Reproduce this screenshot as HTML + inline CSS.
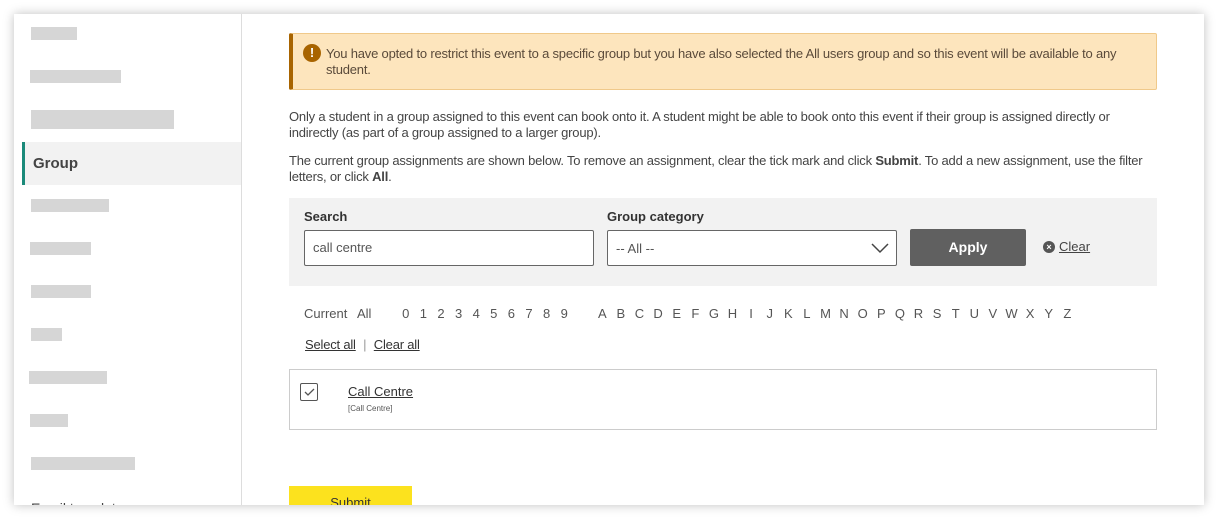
<!DOCTYPE html>
<html><head><meta charset="utf-8"><style>
*{box-sizing:border-box;margin:0;padding:0}
body{width:1218px;height:519px;background:#fff;font-family:"Liberation Sans",sans-serif;color:#333;position:relative;overflow:hidden;font-size:13px}
.card{position:absolute;left:14px;top:14px;width:1190px;height:491px;background:#fff;box-shadow:0 0 10px rgba(0,0,0,.25);overflow:hidden}
.side{position:absolute;left:0;top:0;width:228px;height:491px;border-right:1px solid #ddd}
.bar{position:absolute;height:13px;background:#d6d6d6}
.a{position:absolute}
.grp{position:absolute;left:8px;top:128px;width:219px;height:43px;background:#f2f2f2;border-left:3px solid #1b8a7a;font-size:15px;font-weight:bold;color:#444;padding:13px 0 0 8px}
.warn{position:absolute;left:275px;top:19px;width:868px;height:57px;background:#fde5bd;border:1px solid #f0c98a;border-left:4px solid #a86400;border-radius:2px}
.ic{position:absolute;left:10px;top:10px;width:18px;height:18px;border-radius:50%;background:#a86400;color:#fff;font-weight:bold;font-size:13px;text-align:center;line-height:18px}
.wt{position:absolute;left:33px;top:12px;width:815px;line-height:16px;color:#5a4a3a;letter-spacing:-0.2px}
p.t{position:absolute;left:275px;width:862px;line-height:16px;color:#444;letter-spacing:-0.2px}
.filt{position:absolute;left:275px;top:184px;width:868px;height:88px;background:#f2f2f2}
.lbl{position:absolute;font-weight:bold;color:#333}
.inp{position:absolute;top:32px;height:36px;border:1px solid #666;background:#fff;border-radius:2px;padding:9px 8px;color:#555}
.btn{position:absolute;left:621px;top:31px;width:116px;height:37px;background:#606060;color:#fff;border-radius:2px;font-size:14px;font-weight:bold;text-align:center;line-height:36px}
.lt span{position:absolute;top:292px;text-align:center;color:#555;font-size:13px}
u{text-decoration:underline}
.res{position:absolute;left:275px;top:355px;width:868px;height:61px;border:1px solid #ccc}
.sub{position:absolute;left:275px;top:472px;width:123px;height:30px;background:#fce21e;text-align:center;color:#333;padding-top:9px}
</style></head><body>
<div class="card">
<div class="side">
<div class="bar" style="left:17px;top:13px;width:46px"></div>
<div class="bar" style="left:16px;top:56px;width:91px"></div>
<div class="bar" style="left:17px;top:96px;width:143px;height:19px"></div>
<div class="grp">Group</div>
<div class="bar" style="left:17px;top:185px;width:78px"></div>
<div class="bar" style="left:16px;top:228px;width:61px"></div>
<div class="bar" style="left:17px;top:271px;width:60px"></div>
<div class="bar" style="left:17px;top:314px;width:31px"></div>
<div class="bar" style="left:15px;top:357px;width:78px"></div>
<div class="bar" style="left:16px;top:400px;width:38px"></div>
<div class="bar" style="left:17px;top:443px;width:104px"></div>
<div class="a" style="left:17px;top:486px;font-size:14px;color:#444">Email templates</div>
</div>
<div class="warn"><div class="ic">!</div><div class="wt">You have opted to restrict this event to a specific group but you have also selected the All users group and so this event will be available to any student.</div></div>
<p class="t" style="top:95px">Only a student in a group assigned to this event can book onto it. A student might be able to book onto this event if their group is assigned directly or indirectly (as part of a group assigned to a larger group).</p>
<p class="t" style="top:139px">The current group assignments are shown below. To remove an assignment, clear the tick mark and click <b>Submit</b>. To add a new assignment, use the filter letters, or click <b>All</b>.</p>
<div class="filt">
<div class="lbl" style="left:15px;top:11px">Search</div>
<div class="inp" style="left:15px;width:290px">call centre</div>
<div class="lbl" style="left:318px;top:11px">Group category</div>
<div class="inp" style="left:318px;width:290px;padding-top:10px">-- All --<svg style="position:absolute;right:7px;top:12px" width="18" height="11" viewBox="0 0 18 11"><path d="M1 1l8 8 8-8" fill="none" stroke="#444" stroke-width="1.5"/></svg></div>
<div class="btn">Apply</div>
<div class="a" style="left:754px;top:43px;width:12px;height:12px;border-radius:50%;background:#555;color:#fff;font-size:9px;line-height:12px;text-align:center;font-weight:bold">×</div>
<div class="a" style="left:770px;top:41px;color:#444"><u>Clear</u></div>
</div>
<div class="lt">
<span style="left:290px">Current</span><span style="left:343px">All</span>
<span style="left:383px;width:17.6px">0</span><span style="left:400.6px;width:17.6px">1</span><span style="left:418.2px;width:17.6px">2</span><span style="left:435.8px;width:17.6px">3</span><span style="left:453.4px;width:17.6px">4</span><span style="left:471px;width:17.6px">5</span><span style="left:488.6px;width:17.6px">6</span><span style="left:506.2px;width:17.6px">7</span><span style="left:523.8px;width:17.6px">8</span><span style="left:541.4px;width:17.6px">9</span>
<span style="left:579px;width:18.6px">A</span><span style="left:597.6px;width:18.6px">B</span><span style="left:616.2px;width:18.6px">C</span><span style="left:634.8px;width:18.6px">D</span><span style="left:653.4px;width:18.6px">E</span><span style="left:672px;width:18.6px">F</span><span style="left:690.6px;width:18.6px">G</span><span style="left:709.2px;width:18.6px">H</span><span style="left:727.8px;width:18.6px">I</span><span style="left:746.4px;width:18.6px">J</span><span style="left:765px;width:18.6px">K</span><span style="left:783.6px;width:18.6px">L</span><span style="left:802.2px;width:18.6px">M</span><span style="left:820.8px;width:18.6px">N</span><span style="left:839.4px;width:18.6px">O</span><span style="left:858px;width:18.6px">P</span><span style="left:876.6px;width:18.6px">Q</span><span style="left:895.2px;width:18.6px">R</span><span style="left:913.8px;width:18.6px">S</span><span style="left:932.4px;width:18.6px">T</span><span style="left:951px;width:18.6px">U</span><span style="left:969.6px;width:18.6px">V</span><span style="left:988.2px;width:18.6px">W</span><span style="left:1006.8px;width:18.6px">X</span><span style="left:1025.4px;width:18.6px">Y</span><span style="left:1044px;width:18.6px">Z</span>
</div>
<div class="a" style="left:291px;top:323px;color:#333;letter-spacing:-0.2px"><u>Select all</u> <span style="color:#999;margin:0 4px">|</span> <u>Clear all</u></div>
<div class="res">
<div class="a" style="left:10px;top:13px;width:18px;height:18px;border:1px solid #555;border-radius:2px"><svg width="16" height="16" viewBox="0 0 16 16"><path d="M4 8l3 3 6-6" fill="none" stroke="#555" stroke-width="1.3"/></svg></div>
<div class="a" style="left:58px;top:14px;color:#333"><u>Call Centre</u></div>
<div class="a" style="left:58px;top:34px;font-size:8px;color:#555">[Call Centre]</div>
</div>
<div class="sub">Submit</div>
</div>
</body></html>
